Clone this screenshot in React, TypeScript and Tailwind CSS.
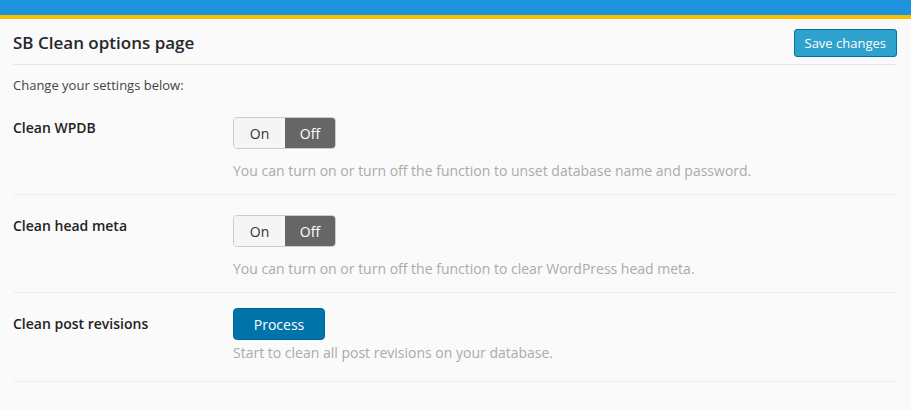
export default function App() {
  const rows = [
    {
      label: "Clean WPDB",
      kind: "toggle",
      desc: "You can turn on or turn off the function to unset database name and password.",
    },
    {
      label: "Clean head meta",
      kind: "toggle",
      desc: "You can turn on or turn off the function to clear WordPress head meta.",
    },
    {
      label: "Clean post revisions",
      kind: "button",
      desc: "Start to clean all post revisions on your database.",
    },
  ];

  return (
    <div className="min-h-screen w-full bg-[#fafafa] font-['Open_Sans',sans-serif] text-[#222]">
      <div className="h-[15px] bg-[#1e93dd]" />
      <div className="h-[4px] bg-[#fcbd00]" />

      <div className="pl-[13px] pr-[14px]">
        {/* header */}
        <div className="flex items-end justify-between border-b border-[#e5e5e5] pb-[7px] pt-[10px]">
          <h2 className="mb-[2px] text-[17px] font-semibold leading-[24px] text-[#23282d]">SB Clean options page</h2>
          <button className="h-[28px] rounded-[3px] border border-[#0074a2] bg-[#2ea2cc] px-[10px] text-[13px] leading-[26px] text-white">
            Save changes
          </button>
        </div>

        <p className="mt-[10px] text-[13px] leading-[20px] text-[#444]">Change your settings below:</p>

        <div className="mt-[2px]">
          {rows.map((row) => (
            <div
              key={row.label}
              className={`flex border-b border-[#eeeeee] ${row.kind === "toggle" ? "pb-[13px]" : "pb-[18px]"}`}
            >
              <div className="w-[220px] shrink-0 pt-[21px] text-[14px] font-semibold leading-[20px] text-[#222]">
                {row.label}
              </div>
              {row.kind === "toggle" ? (
                <div className="pt-[20px]">
                  <div className="flex h-[32px] w-[103px] overflow-hidden rounded-[4px] border border-[#cccccc] text-[14px]">
                    <span className="flex w-[51px] items-center justify-center bg-[#f5f5f5] text-[#333]">On</span>
                    <span className="flex flex-1 items-center justify-center bg-[#666666] text-white">Off</span>
                  </div>
                  <p className="mt-[12px] text-[14px] leading-[20px] text-[#aaaaaa]">{row.desc}</p>
                </div>
              ) : (
                <div className="pt-[15px]">
                  <button className="h-[32px] w-[92px] rounded-[4px] border border-[#006799] bg-[#0073aa] text-[14px] text-white">
                    Process
                  </button>
                  <p className="mt-[3px] text-[14px] leading-[20px] text-[#aaaaaa]">{row.desc}</p>
                </div>
              )}
            </div>
          ))}
        </div>
      </div>
    </div>
  );
}
